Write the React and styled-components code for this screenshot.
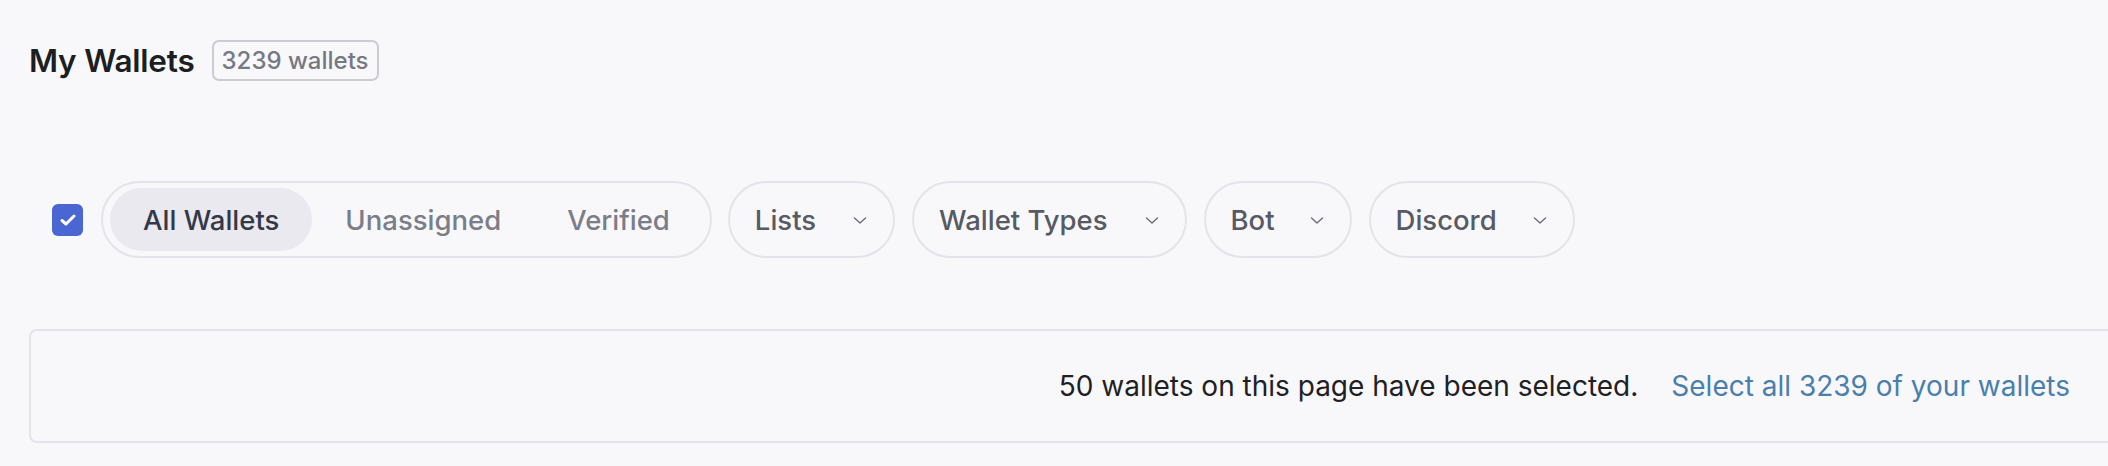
import React, { useState } from "react";
import styled, { createGlobalStyle } from "styled-components";

const Global = createGlobalStyle`
  html, body { margin: 0; padding: 0; background: #f8f8fb; }
  body { font-family: Inter, "Noto Sans", sans-serif; color: #1f2024; overflow: hidden; }
  * { box-sizing: border-box; }
`;

const Page = styled.div`
  padding: 40px 0 0 29px;
  overflow: hidden;
  min-height: 466px;
`;

const TitleRow = styled.div`
  display: flex;
  align-items: center;
  gap: 17px;
  height: 41px;
`;

const Title = styled.h1`
  margin: 0;
  font-size: 31.5px;
  font-weight: 600;
  color: #1d1e22;
  letter-spacing: -0.2px;
  line-height: 1;
`;

const CountBadge = styled.span`
  display: inline-flex;
  align-items: center;
  height: 41px;
  padding: 0 8px;
  border: 2px solid #cbccd3;
  border-radius: 7px;
  font-size: 24px;
  font-weight: 500;
  color: #767882;
`;

const FilterRow = styled.div`
  display: flex;
  align-items: center;
  margin-top: 100px;
  padding-left: 23px;
  gap: 17px;
`;

const Dropdowns = styled.div`
  display: flex;
  align-items: center;
  gap: 17px;
  margin-left: -1px;
`;

const CheckBox = styled.button`
  width: 31px;
  height: 32px;
  border: none;
  border-radius: 6px;
  background: #4a66d2;
  display: flex;
  align-items: center;
  justify-content: center;
  padding: 0;
  margin-right: 1px;
  cursor: pointer;
`;

const Segmented = styled.div`
  display: flex;
  align-items: center;
  height: 77px;
  padding: 5px 7px;
  border: 2px solid #e2e4ea;
  border-radius: 40px;
`;

const Tab = styled.button`
  height: 63px;
  padding: 0 33px;
  border: none;
  border-radius: 32px;
  background: ${(p) => (p.$active ? "#e9e9ef" : "transparent")};
  color: ${(p) => (p.$active ? "#343848" : "#7b7d88")};
  font-family: inherit;
  font-size: 27.5px;
  font-weight: 500;
  cursor: pointer;
`;

const Dropdown = styled.button`
  display: flex;
  align-items: center;
  gap: ${(p) => p.$gap || 35}px;
  height: 77px;
  padding: 0 26px 0 25px;
  border: 2px solid #e2e4ea;
  border-radius: 40px;
  background: transparent;
  color: #575a63;
  font-family: inherit;
  font-size: 27.5px;
  font-weight: 500;
  cursor: pointer;
`;

const Chevron = styled.svg`
  width: 14px;
  height: 10px;
  flex: none;
`;

const SelectionBar = styled.div`
  margin-top: 71px;
  margin-right: -20px;
  height: 114px;
  border: 2px solid #e2e4ea;
  border-radius: 8px;
  display: flex;
  align-items: center;
  justify-content: flex-end;
  padding-right: 56px;
  gap: 33px;
  font-size: 28px;
`;

const Notice = styled.span`
  color: #1f2024;
`;

const SelectAll = styled.a`
  color: #4a7fab;
  text-decoration: none;
  cursor: pointer;
`;

const ChevronIcon = () => (
  <Chevron viewBox="0 0 14 10" fill="none">
    <path d="M1.5 3 L7 8 L12.5 3" stroke="#6b6e78" strokeWidth="1.4" strokeLinecap="round" strokeLinejoin="round" />
  </Chevron>
);

export default function App() {
  const [active, setActive] = useState("All Wallets");
  const tabs = ["All Wallets", "Unassigned", "Verified"];
  const dropdowns = [
    { label: "Lists", gap: 37 },
    { label: "Wallet Types", gap: 37 },
    { label: "Bot", gap: 35 },
    { label: "Discord", gap: 36 },
  ];
  return (
    <Page>
      <Global />
      <TitleRow>
        <Title>My Wallets</Title>
        <CountBadge>3239 wallets</CountBadge>
      </TitleRow>
      <FilterRow>
        <CheckBox aria-label="select all">
          <svg width="18" height="14" viewBox="0 0 18 14" fill="none">
            <path d="M3 7.5 L7 11 L15 3" stroke="#ffffff" strokeWidth="3" strokeLinecap="round" strokeLinejoin="round" />
          </svg>
        </CheckBox>
        <Segmented>
          {tabs.map((t) => (
            <Tab key={t} $active={active === t} onClick={() => setActive(t)}>
              {t}
            </Tab>
          ))}
        </Segmented>
        <Dropdowns>
          {dropdowns.map((d) => (
            <Dropdown key={d.label} $gap={d.gap}>
              {d.label}
              <ChevronIcon />
            </Dropdown>
          ))}
        </Dropdowns>
      </FilterRow>
      <SelectionBar>
        <Notice>50 wallets on this page have been selected.</Notice>
        <SelectAll>Select all 3239 of your wallets</SelectAll>
      </SelectionBar>
    </Page>
  );
}
